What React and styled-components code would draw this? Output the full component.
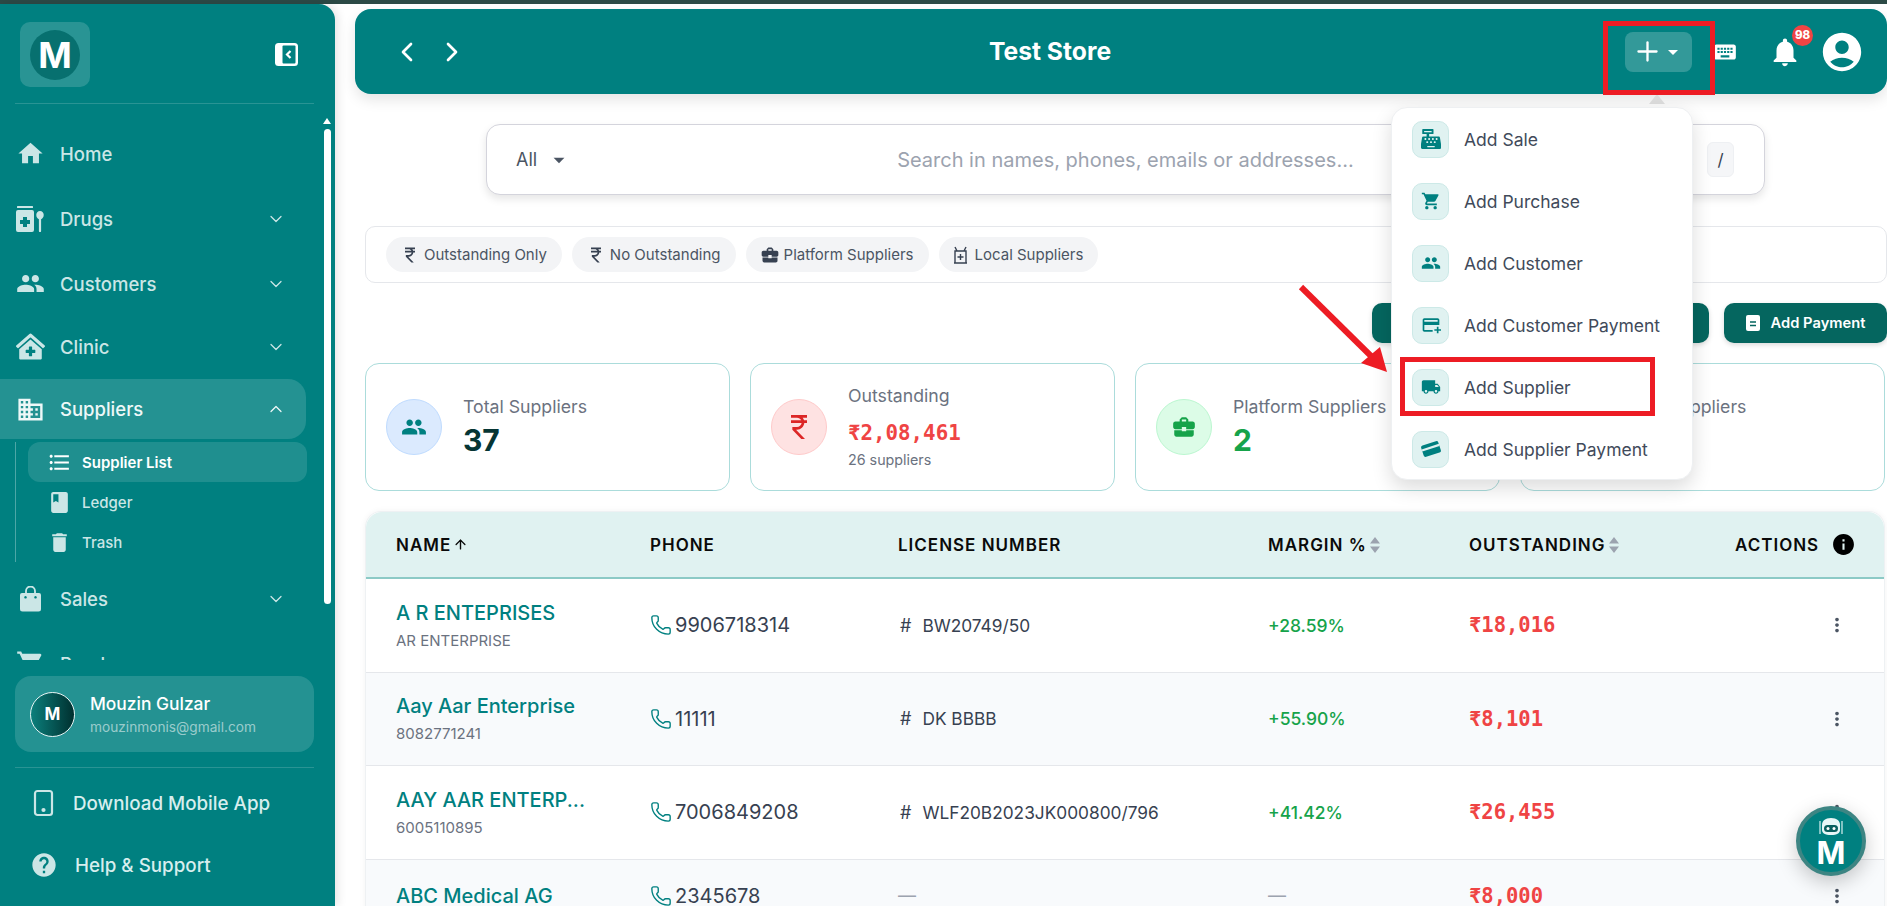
import React from "react";
import styled, { createGlobalStyle } from "styled-components";
import {
  MdHome, MdPeople, MdDomain, MdFormatListBulleted, MdBook, MdDelete, MdShoppingCart, MdHelp,
  MdKeyboard, MdNotifications, MdAccountCircle, MdArrowDropDown, MdLocalShipping, MdOutlineAddCard,
  MdCurrencyRupee, MdBusinessCenter, MdMoreVert, MdInfo,
} from "react-icons/md";
import { FaCashRegister, FaClinicMedical } from "react-icons/fa";
import { ChevronDown, ChevronUp, ChevronLeft, ChevronRight, Phone, ArrowUp, Plus } from "lucide-react";

const Global = createGlobalStyle`
  html, body { margin: 0; padding: 0; height: 906px; overflow: hidden; background: #fff; }
  body { font-family: Inter, "Noto Sans", sans-serif; }
  #root { height: 906px; }
  * { box-sizing: border-box; }
`;

const Page = styled.div`position: relative; width: 1887px; height: 906px; overflow: hidden; background: #fff;`;
const TopStrip = styled.div`height: 4px; background: #2c4a46;`;
const Shell = styled.div`display: flex; height: 902px;`;

const Sidebar = styled.aside`
  position: relative; flex: 0 0 335px; height: 902px; display: flex; flex-direction: column;
  background: #008080; border-top-right-radius: 16px; box-shadow: 3px 0 10px rgba(0,0,0,.1); color: #fff; z-index: 2;
`;
const Brand = styled.div`
  height: 100px; margin: 0 21px 0 15px; padding: 18px 16px 0 5px; display: flex; justify-content: space-between; align-items: flex-start;
  border-bottom: 1px solid rgba(255,255,255,.16); flex: 0 0 auto;
`;
const LogoBox = styled.div`
  width: 70px; height: 65px; border-radius: 10px; background: rgba(255,255,255,.16);
  display: flex; align-items: center; justify-content: center;
`;
const LogoCircle = styled.div`
  width: 50px; height: 50px; border-radius: 50%; background: #07706f; color: #fff; font-weight: 700; font-size: 36px;
  display: flex; align-items: center; justify-content: center; line-height: 1;
`;
const ToggleBtn = styled.svg`width: 23px; height: 23px; margin-top: 21px; flex: none;`;
const Nav = styled.nav`position: relative; height: 556px; padding-top: 17px; overflow: hidden; flex: 0 0 auto;`;
const Row = styled.div`
  display: flex; align-items: center; height: ${p => p.$h || 65}px; width: 306px; padding-left: 15px;
  margin-top: ${p => p.$mt || 0}px; font-size: 18.5px; font-weight: 500;
  color: ${p => p.$open ? "#eef8f8" : "#cbe6e6"};
  background: ${p => p.$open ? "rgba(255,255,255,.14)" : "transparent"};
  border-radius: ${p => p.$open ? "0 18px 18px 0" : "0"};
`;
const RowIcon = styled.span`width: 30px; height: 30px; display: flex; align-items: center; justify-content: center; font-size: 29px; flex: none;`;
const RowLabel = styled.span`margin-left: 15px; flex: 1;`;
const RowChevron = styled.span`width: 20px; margin-right: 20px; display: flex; justify-content: center;`;
const SubList = styled.div`margin: 3px 0 4px 15px; padding-left: 12px; width: 291px; border-left: 1.5px solid rgba(255,255,255,.3);`;
const SubRow = styled.div`
  height: 40px; width: 279px; display: flex; align-items: center; padding-left: 19px; font-size: 15px; font-weight: ${p => p.$active ? 600 : 500};
  color: ${p => p.$active ? "#fff" : "#cbe6e6"}; background: ${p => p.$active ? "rgba(255,255,255,.12)" : "transparent"}; border-radius: 12px;
`;
const SubIcon = styled.span`width: 25px; display: flex; justify-content: center; font-size: 29px; margin-right: 10px; height: 26px; align-items: center;`;
const ScrollArrow = styled.div`
  position: absolute; right: 4px; top: 14px; width: 0; height: 0; border-left: 4.5px solid transparent; border-right: 4.5px solid transparent; border-bottom: 6px solid #fff;
`;
const ScrollThumb = styled.div`position: absolute; right: 4px; top: 25px; width: 7px; height: 475px; background: #fff; border-radius: 4px;`;
const ProfileCard = styled.div`
  margin: 16px 21px 0 15px; height: 76px; border-radius: 16px; background: rgba(255,255,255,.14); display: flex; align-items: center; padding-left: 15px; flex: none;
`;
const Avatar = styled.div`
  width: 45px; height: 45px; border-radius: 50%; border: 1px solid #e8f4f4; background: linear-gradient(90deg, #0b7f7c, #00302f);
  color: #fff; font-weight: 700; font-size: 17px; display: flex; align-items: center; justify-content: center; flex: none;
`;
const ProfileText = styled.div`margin-left: 15px; display: flex; flex-direction: column; gap: 3px;`;
const ProfileName = styled.div`font-size: 17.4px; font-weight: 500; color: #fff; line-height: 22px;`;
const ProfileMail = styled.div`font-size: 13.7px; color: rgba(255,255,255,.55); line-height: 18px;`;
const FootDivider = styled.div`margin: 15px 21px 4px 15px; height: 1px; background: rgba(255,255,255,.16); flex: none;`;
const FootRow = styled.div`
  display: flex; align-items: center; height: 62px; padding-left: ${p => p.$pl}px; font-size: 18.8px; font-weight: 500; color: #d7eeee; flex: none;
  gap: ${p => p.$gap}px;
`;

const Main = styled.main`flex: 1; min-width: 0; height: 902px; overflow: hidden; display: flex; flex-direction: column;`;
const Header = styled.header`
  margin: 5px 0 0 20px; height: 85px; background: #008080; border-radius: 16px; display: flex; align-items: center; flex: none;
  padding: 0 27px 0 36px; color: #fff; box-shadow: 0 6px 14px rgba(0,0,0,.1);
`;
const NavArrows = styled.div`display: flex; gap: 13px; width: 85px;`;
const Title = styled.div`flex: 1; text-align: center; font-size: 24.7px; font-weight: 700; padding-bottom: 2px;`;
const HeaderActions = styled.div`display: flex; align-items: center;`;
const PlusBtn = styled.div`
  width: 67px; height: 40px; background: rgba(255,255,255,.2); border-radius: 8px; display: flex; align-items: center; justify-content: center; margin-left: 1px;
`;
const CaretTight = styled.span`display: flex; margin-left: -2px; font-size: 24px;`;
const KeyboardWrap = styled.span`display: flex; font-size: 26px; margin-left: 20px; width: 26px;`;
const BellWrap = styled.span`position: relative; display: flex; font-size: 34px; margin-left: 30px;`;
const Badge = styled.span`
  position: absolute; left: 24px; top: -10px; width: 21px; height: 21px; border-radius: 50%; background: #ef4444; color: #fff;
  font-size: 11.5px; font-weight: 800; display: flex; align-items: center; justify-content: center;
`;
const UserWrap = styled.span`display: flex; font-size: 46px; margin-left: 17px; margin-right: -5px;`;

const Content = styled.div`padding: 0 2px 0 30px; display: flex; flex-direction: column; flex: 1; min-height: 0;`;
const SearchBar = styled.div`
  margin: 30px 120px 0 121px; height: 71px; border: 1px solid #d4d4dc; border-radius: 14px; background: #fff; box-shadow: 0 4px 8px rgba(0,0,0,.1);
  display: flex; align-items: center; padding: 0 30px 0 29px; flex: none;
`;
const SearchScope = styled.div`display: flex; align-items: center; color: #4b5563; font-size: 18px; gap: 9px; width: 100px;`;
const Placeholder = styled.div`flex: 1; text-align: center; color: #9ca3af; font-size: 20px; padding-right: 54px; white-space: nowrap;`;
const TrailingDot = styled.span`color: #6b7280; font-size: 18px; margin-right: 13px;`;
const Kbd = styled.div`
  width: 27px; height: 35px; border-radius: 6px; background: #f5f6f8; border: 1px solid #eef0f3; color: #374151; display: flex; align-items: center; justify-content: center; font-size: 17px;
`;
const FilterCard = styled.div`
  margin: 31px -2px 0 0; height: 57px; border: 1px solid #e5e7eb; border-radius: 10px; background: #fff; padding-left: 20px; display: flex; align-items: center; gap: 10px; flex: none;
`;
const Chip = styled.div`
  height: 35px; padding: 0 15px 0 14px; background: #f3f4f6; border-radius: 18px; display: flex; align-items: center; gap: 4px; color: #4b5563; font-size: 15px; white-space: nowrap;
`;
const ChipIcon = styled.span`display: flex; font-size: 20px; color: #374151; margin-right: ${p => p.$mr || 0}px;`;
const ButtonRow = styled.div`margin: 20px -2px 0 0; height: 40px; display: flex; justify-content: flex-end; gap: 15px; flex: none;`;
const DarkButton = styled.div`
  height: 40px; width: ${p => p.$w}px; background: #05665f; border-radius: 10px; color: #fff; font-size: 14.7px; font-weight: 600;
  display: flex; align-items: center; justify-content: center; gap: 11px; box-shadow: 0 2px 5px rgba(0,0,0,.15);
`;
const Stats = styled.div`margin-top: 20px; display: grid; grid-template-columns: repeat(4, 1fr); gap: 20px; flex: none;`;
const StatCard = styled.div`
  height: 128px; border: 1px solid #abdcdb; border-radius: 14px; background: #fff; display: flex; align-items: center; padding-left: 20px; gap: 21px;
`;
const StatCircle = styled.div`
  width: 56px; height: 56px; border-radius: 50%; background: ${p => p.$bg}; border: 1px solid ${p => p.$bd}; color: ${p => p.$c};
  display: flex; align-items: center; justify-content: center; font-size: ${p => p.$s || 26}px; flex: none;
`;
const StatText = styled.div`display: flex; flex-direction: column;`;
const StatLabel = styled.div`font-size: 17.7px; color: #6b7280; line-height: 22px;`;
const StatValue = styled.div`font-size: 30px; font-weight: 700; color: ${p => p.$c || "#063534"}; line-height: 38px; margin-top: 3px;`;
const StatMoney = styled.div`
  font-family: "DejaVu Sans Mono", "Liberation Mono", monospace; font-size: 20.8px; font-weight: 600; color: #ef4444; line-height: 30px; margin-top: 11px;
`;
const StatSub = styled.div`font-size: 14.3px; color: #6b7280; line-height: 20px; margin-top: 2px;`;

const Table = styled.div`margin-top: 20px; border: 1px solid #eef1f3; border-bottom: 0; border-radius: 16px 16px 0 0; flex: none; box-shadow: 0 0 6px rgba(0,0,0,.05);`;
const Grid = styled.div`display: grid; grid-template-columns: 254px 248px 370px 201px 266px 1fr; padding-left: 30px; align-items: center;`;
const THead = styled(Grid)`
  height: 67px; background: #e0f2f1; border-bottom: 2px solid #8ccac6; border-radius: 16px 16px 0 0;
  font-size: 17px; font-weight: 600; color: #0a0a0a; letter-spacing: 1px;
`;
const TH = styled.div`display: flex; align-items: center; gap: ${p => p.$gap || 2}px;`;
const TRow = styled(Grid)`
  height: ${p => p.$h || 93.5}px; background: ${p => p.$alt ? "#f8fafc" : "#fff"}; border-bottom: 1px solid #e5e7eb;
`;
const NameCell = styled.div`display: flex; flex-direction: column; gap: 7px;`;
const SupplierName = styled.div`font-size: 20px; font-weight: 500; color: #008080; line-height: 24px; white-space: nowrap;`;
const SupplierSub = styled.div`font-size: 15px; color: #6b7280; line-height: 18px;`;
const PhoneCell = styled.div`display: flex; align-items: center; gap: 3px; font-size: 20px; color: #374151;`;
const PhoneIcon = styled.span`display: flex; color: #008080;`;
const LicenseCell = styled.div`display: flex; align-items: center; gap: 11px; font-size: 17.3px; color: #374151; white-space: nowrap;`;
const Hash = styled.span`font-size: 18px; padding-left: 2px; color: #374151;`;
const Dash = styled.span`color: #9ca3af; font-size: 18px;`;
const Margin = styled.div`font-size: 17.5px; font-weight: 500; color: #16a34a;`;
const Money = styled.div`font-family: "DejaVu Sans Mono", "Liberation Mono", monospace; font-size: 20.5px; font-weight: 600; color: #ef4444;`;
const Dots = styled.div`display: flex; padding-left: 91px; font-size: 22px; color: #4b5563;`;

const Menu = styled.div`
  position: absolute; left: 1391px; top: 107px; width: 302px; height: 373px; background: #fff; border-radius: 16px; border: 1px solid #eef0f2;
  box-shadow: 0 8px 20px rgba(0,0,0,.14); z-index: 5;
`;
const MenuCaret = styled.div`
  position: absolute; left: 1649px; top: 94px; width: 0; height: 0; border-left: 8px solid transparent; border-right: 8px solid transparent; border-bottom: 10px solid #dcdcdc; z-index: 5;
`;
const MenuItem = styled.div`height: 62px; display: flex; align-items: center; padding-left: 20px; gap: 15px; font-size: 17.5px; color: #414a5a;`;
const MenuIcon = styled.span`
  width: 37px; height: 37px; border-radius: 10px; background: #e0f2f1; border: 1px solid #cce9e7; color: #008080; display: flex; align-items: center; justify-content: center; font-size: 20px; flex: none;
`;
const RedBox = styled.div`
  position: absolute; left: ${p => p.$x}px; top: ${p => p.$y}px; width: ${p => p.$w}px; height: ${p => p.$h}px; border: 5px solid #ed1c24; z-index: 6; pointer-events: none;
`;
const ArrowSvg = styled.svg`position: absolute; left: 1295px; top: 280px; z-index: 6;`;
const Fab = styled.div`
  position: absolute; left: 1796px; top: 806px; width: 70px; height: 70px; border-radius: 50%; background: #008080; border: 4px solid #3d8583;
  box-shadow: 0 6px 20px rgba(0,0,0,.22); color: #fff; display: flex; flex-direction: column; align-items: center; justify-content: center; z-index: 7;
`;
const FabM = styled.span`font-size: 31px; font-weight: 700; line-height: 25px; margin-top: -1px;`;

const Rupee = () => <MdCurrencyRupee />;
const SortArrows = () => (
  <svg width="12" height="18" viewBox="0 0 12 18" fill="#9ca3af"><path d="M6 1l5 6.5H1zM6 17l-5-6.5h10z" /></svg>
);
const DrugIcon = () => (
  <svg width="28" height="26" viewBox="0 0 28 26" fill="#cbe6e6">
    <rect x="1" y="0" width="16" height="2" rx=".5" />
    <path fillRule="evenodd" d="M2 4h14a2 2 0 0 1 2 2v18a2 2 0 0 1-2 2H2a2 2 0 0 1-2-2V6a2 2 0 0 1 2-2zm5 7v3H4v4h3v3h4v-3h3v-4h-3v-3z" />
    <path d="M24 5a3.7 3.7 0 0 1 3.7 4c0 2-1 3.6-2.6 4.2V25a1.1 1.1 0 0 1-2.2 0V13.2C21.3 12.6 20.3 11 20.3 9A3.7 3.7 0 0 1 24 5z" />
  </svg>
);
const BagIcon = () => (
  <svg width="21" height="26" viewBox="0 0 21 26" fill="#cbe6e6">
    <path fillRule="evenodd" d="M2 7h17a2 2 0 0 1 2 2v14a2.5 2.5 0 0 1-2.5 2.5h-16A2.5 2.500 0 0 1 0 23V9a2 2 0 0 1 2-2zm3.5 3a1.3 1.3 0 1 0 .01 0zm10 0a1.3 1.3 0 1 0 .01 0z" />
    <path d="M6 8V5a4.5 4.5 0 0 1 9 0v3" fill="none" stroke="#cbe6e6" strokeWidth="1.8" />
  </svg>
);
const ToggleIcon = () => (
  <ToggleBtn viewBox="0 0 23 23">
    <rect width="23" height="23" rx="3.5" fill="#fff" />
    <rect x="7.5" y="2.5" width="13" height="18" rx="1" fill="#008080" />
    <path d="M15.5 8L12 11.5l3.5 3.5" stroke="#fff" strokeWidth="2.2" fill="none" />
  </ToggleBtn>
);
const LocalIcon = () => (
  <svg width="15" height="18" viewBox="0 0 15 18" fill="none" stroke="#374151" strokeWidth="1.4">
    <path d="M2 5h11v12H2zM1 17h13M2 1l2 4M13 1l-2 4M7.5 8v6M4.5 11h6" />
  </svg>
);
const DocIcon = () => (
  <svg width="14" height="16" viewBox="0 0 14 16"><rect width="14" height="16" rx="2" fill="#fff" /><path d="M4 7h6M4 10.5h6" stroke="#05665f" strokeWidth="1.6" /></svg>
);
const CardIcon = () => (
  <svg width="20" height="18" viewBox="0 0 20 18"><g transform="rotate(-18 10 9)"><rect x="1" y="3" width="18" height="12" rx="2" fill="#008080" /><rect x="1" y="6.5" width="18" height="2.2" fill="#e0f2f1" /></g></svg>
);
const TabletIcon = () => (
  <svg width="26" height="28" viewBox="0 0 26 28" fill="none" stroke="#cbe6e6" strokeWidth="2.2">
    <rect x="4" y="2" width="17" height="24" rx="2.5" /><circle cx="12.5" cy="21" r="1" fill="#cbe6e6" />
  </svg>
);
const BotIcon = () => (
  <svg width="32" height="24" viewBox="0 0 32 24" fill="none">
    <path d="M5 4v13M27 4v13" stroke="#d8eeee" strokeWidth="1.2" />
    <path d="M16 1c6 0 9 3 9 7v5c0 3-3 5-9 5s-9-2-9-5V8c0-4 3-7 9-7z" fill="#e8f6f6" />
    <rect x="9" y="8" width="14" height="7" rx="3.5" fill="#0b5f5e" />
    <circle cx="13" cy="11.5" r="1.5" fill="#fff" /><circle cx="19" cy="11.5" r="1.5" fill="#fff" />
  </svg>
);
const RedArrow = () => (
  <ArrowSvg width="110" height="110" viewBox="0 0 110 110">
    <path d="M6 7L76 76" stroke="#ed1c24" strokeWidth="6" />
    <path d="M66 83L85 67L92 92z" fill="#ed1c24" />
  </ArrowSvg>
);

const chevronProps = { size: 22, strokeWidth: 1.5 };
const navTop = [
  { label: "Home", icon: <MdHome /> },
  { label: "Drugs", icon: <DrugIcon />, more: true },
  { label: "Customers", icon: <MdPeople />, more: true },
  { label: "Clinic", icon: <FaClinicMedical />, more: true, h: 61 },
];
const menuItems = [
  ["Add Sale", <FaCashRegister key="a" />],
  ["Add Purchase", <MdShoppingCart key="b" />],
  ["Add Customer", <MdPeople key="c" />],
  ["Add Customer Payment", <MdOutlineAddCard key="d" />],
  ["Add Supplier", <MdLocalShipping key="e" />],
  ["Add Supplier Payment", <CardIcon key="f" />],
];
const rows = [
  { name: "A R ENTEPRISES", sub: "AR ENTERPRISE", phone: "9906718314", lic: "BW20749/50", margin: "+28.59%", due: "₹18,016" },
  { name: "Aay Aar Enterprise", sub: "8082771241", phone: "11111", lic: "DK BBBB", margin: "+55.90%", due: "₹8,101" },
  { name: "AAY AAR ENTERP...", sub: "6005110895", phone: "7006849208", lic: "WLF20B2023JK000800/796", margin: "+41.42%", due: "₹26,455" },
  { name: "ABC Medical AG", phone: "2345678", due: "₹8,000" },
];

export default function App() {
  return (
    <Page>
      <Global />
      <TopStrip />
      <Shell>
        <Sidebar>
          <Brand>
            <LogoBox><LogoCircle>M</LogoCircle></LogoBox>
            <ToggleIcon />
          </Brand>
          <Nav>
            {navTop.map(n => (
              <Row key={n.label} $h={n.h}>
                <RowIcon>{n.icon}</RowIcon>
                <RowLabel>{n.label}</RowLabel>
                {n.more && <RowChevron><ChevronDown {...chevronProps} /></RowChevron>}
              </Row>
            ))}
            <Row $open $h={60} $mt={2}>
              <RowIcon><MdDomain /></RowIcon>
              <RowLabel>Suppliers</RowLabel>
              <RowChevron><ChevronUp {...chevronProps} /></RowChevron>
            </Row>
            <SubList>
              <SubRow $active><SubIcon><MdFormatListBulleted /></SubIcon>Supplier List</SubRow>
              <SubRow><SubIcon><MdBook /></SubIcon>Ledger</SubRow>
              <SubRow><SubIcon><MdDelete /></SubIcon>Trash</SubRow>
            </SubList>
            <Row>
              <RowIcon><BagIcon /></RowIcon>
              <RowLabel>Sales</RowLabel>
              <RowChevron><ChevronDown {...chevronProps} /></RowChevron>
            </Row>
            <Row>
              <RowIcon><MdShoppingCart /></RowIcon>
              <RowLabel>Purchases</RowLabel>
              <RowChevron><ChevronDown {...chevronProps} /></RowChevron>
            </Row>
            <ScrollArrow />
            <ScrollThumb />
          </Nav>
          <ProfileCard>
            <Avatar>M</Avatar>
            <ProfileText>
              <ProfileName>Mouzin Gulzar</ProfileName>
              <ProfileMail>mouzinmonis@gmail.com</ProfileMail>
            </ProfileText>
          </ProfileCard>
          <FootDivider />
          <FootRow $pl={31} $gap={16}><TabletIcon />Download Mobile App</FootRow>
          <FootRow $pl={30} $gap={17}><MdHelp size={28} color="#cbe6e6" />Help &amp; Support</FootRow>
        </Sidebar>
        <Main>
          <Header>
            <NavArrows>
              <ChevronLeft size={32} strokeWidth={2} />
              <ChevronRight size={32} strokeWidth={2} />
            </NavArrows>
            <Title>Test Store</Title>
            <HeaderActions>
              <PlusBtn><Plus size={31} strokeWidth={1.8} /><CaretTight><MdArrowDropDown /></CaretTight></PlusBtn>
              <KeyboardWrap><MdKeyboard /></KeyboardWrap>
              <BellWrap><MdNotifications /><Badge>98</Badge></BellWrap>
              <UserWrap><MdAccountCircle /></UserWrap>
            </HeaderActions>
          </Header>
          <Content>
            <SearchBar>
              <SearchScope>All <MdArrowDropDown size={26} /></SearchScope>
              <Placeholder>Search in names, phones, emails or addresses...</Placeholder>
              <TrailingDot>.</TrailingDot>
              <Kbd>/</Kbd>
            </SearchBar>
            <FilterCard>
              <Chip><ChipIcon><Rupee /></ChipIcon>Outstanding Only</Chip>
              <Chip><ChipIcon><Rupee /></ChipIcon>No Outstanding</Chip>
              <Chip><ChipIcon><MdBusinessCenter /></ChipIcon>Platform Suppliers</Chip>
              <Chip><ChipIcon $mr={3}><LocalIcon /></ChipIcon>Local Suppliers</Chip>
            </FilterCard>
            <ButtonRow>
              <DarkButton $w={337} />
              <DarkButton $w={163}><DocIcon />Add Payment</DarkButton>
            </ButtonRow>
            <Stats>
              <StatCard>
                <StatCircle $bg="#dbeafe" $bd="#bfdbfe" $c="#008080"><MdPeople /></StatCircle>
                <StatText><StatLabel>Total Suppliers</StatLabel><StatValue>37</StatValue></StatText>
              </StatCard>
              <StatCard>
                <StatCircle $bg="#fee2e2" $bd="#fecaca" $c="#dc2626" $s={32}><MdCurrencyRupee /></StatCircle>
                <StatText>
                  <StatLabel>Outstanding</StatLabel>
                  <StatMoney>₹2,08,461</StatMoney>
                  <StatSub>26 suppliers</StatSub>
                </StatText>
              </StatCard>
              <StatCard>
                <StatCircle $bg="#dcfce7" $bd="#bbf7d0" $c="#16a34a"><MdBusinessCenter /></StatCircle>
                <StatText><StatLabel>Platform Suppliers</StatLabel><StatValue $c="#16a34a">2</StatValue></StatText>
              </StatCard>
              <StatCard>
                <StatCircle $bg="#e0f2f1" $bd="#cce9e7" $c="#008080"><MdDomain /></StatCircle>
                <StatText><StatLabel>Local Suppliers</StatLabel><StatValue>35</StatValue></StatText>
              </StatCard>
            </Stats>
            <Table>
              <THead>
                <TH>NAME<ArrowUp size={15} strokeWidth={2.2} /></TH>
                <TH>PHONE</TH>
                <TH>LICENSE NUMBER</TH>
                <TH>MARGIN %<SortArrows /></TH>
                <TH>OUTSTANDING<SortArrows /></TH>
                <TH $gap={12}>ACTIONS<MdInfo size={25} color="#000" /></TH>
              </THead>
              {rows.map((r, i) => (
                <TRow key={r.name} $alt={i % 2 === 1} $h={i === 3 ? 73 : undefined}>
                  <NameCell>
                    <SupplierName>{r.name}</SupplierName>
                    {r.sub && <SupplierSub>{r.sub}</SupplierSub>}
                  </NameCell>
                  <PhoneCell><PhoneIcon><Phone size={22} strokeWidth={1.5} /></PhoneIcon>{r.phone}</PhoneCell>
                  {r.lic ? <LicenseCell><Hash>#</Hash>{r.lic}</LicenseCell> : <Dash>—</Dash>}
                  {r.margin ? <Margin>{r.margin}</Margin> : <Dash>—</Dash>}
                  <Money>{r.due}</Money>
                  <Dots><MdMoreVert /></Dots>
                </TRow>
              ))}
            </Table>
          </Content>
        </Main>
      </Shell>
      <MenuCaret />
      <Menu>
        {menuItems.map(([label, icon]) => (
          <MenuItem key={label}><MenuIcon>{icon}</MenuIcon>{label}</MenuItem>
        ))}
      </Menu>
      <RedBox $x={1603} $y={21} $w={112} $h={74} />
      <RedBox $x={1400} $y={357} $w={255} $h={59} />
      <RedArrow />
      <Fab><BotIcon /><FabM>M</FabM></Fab>
    </Page>
  );
}
